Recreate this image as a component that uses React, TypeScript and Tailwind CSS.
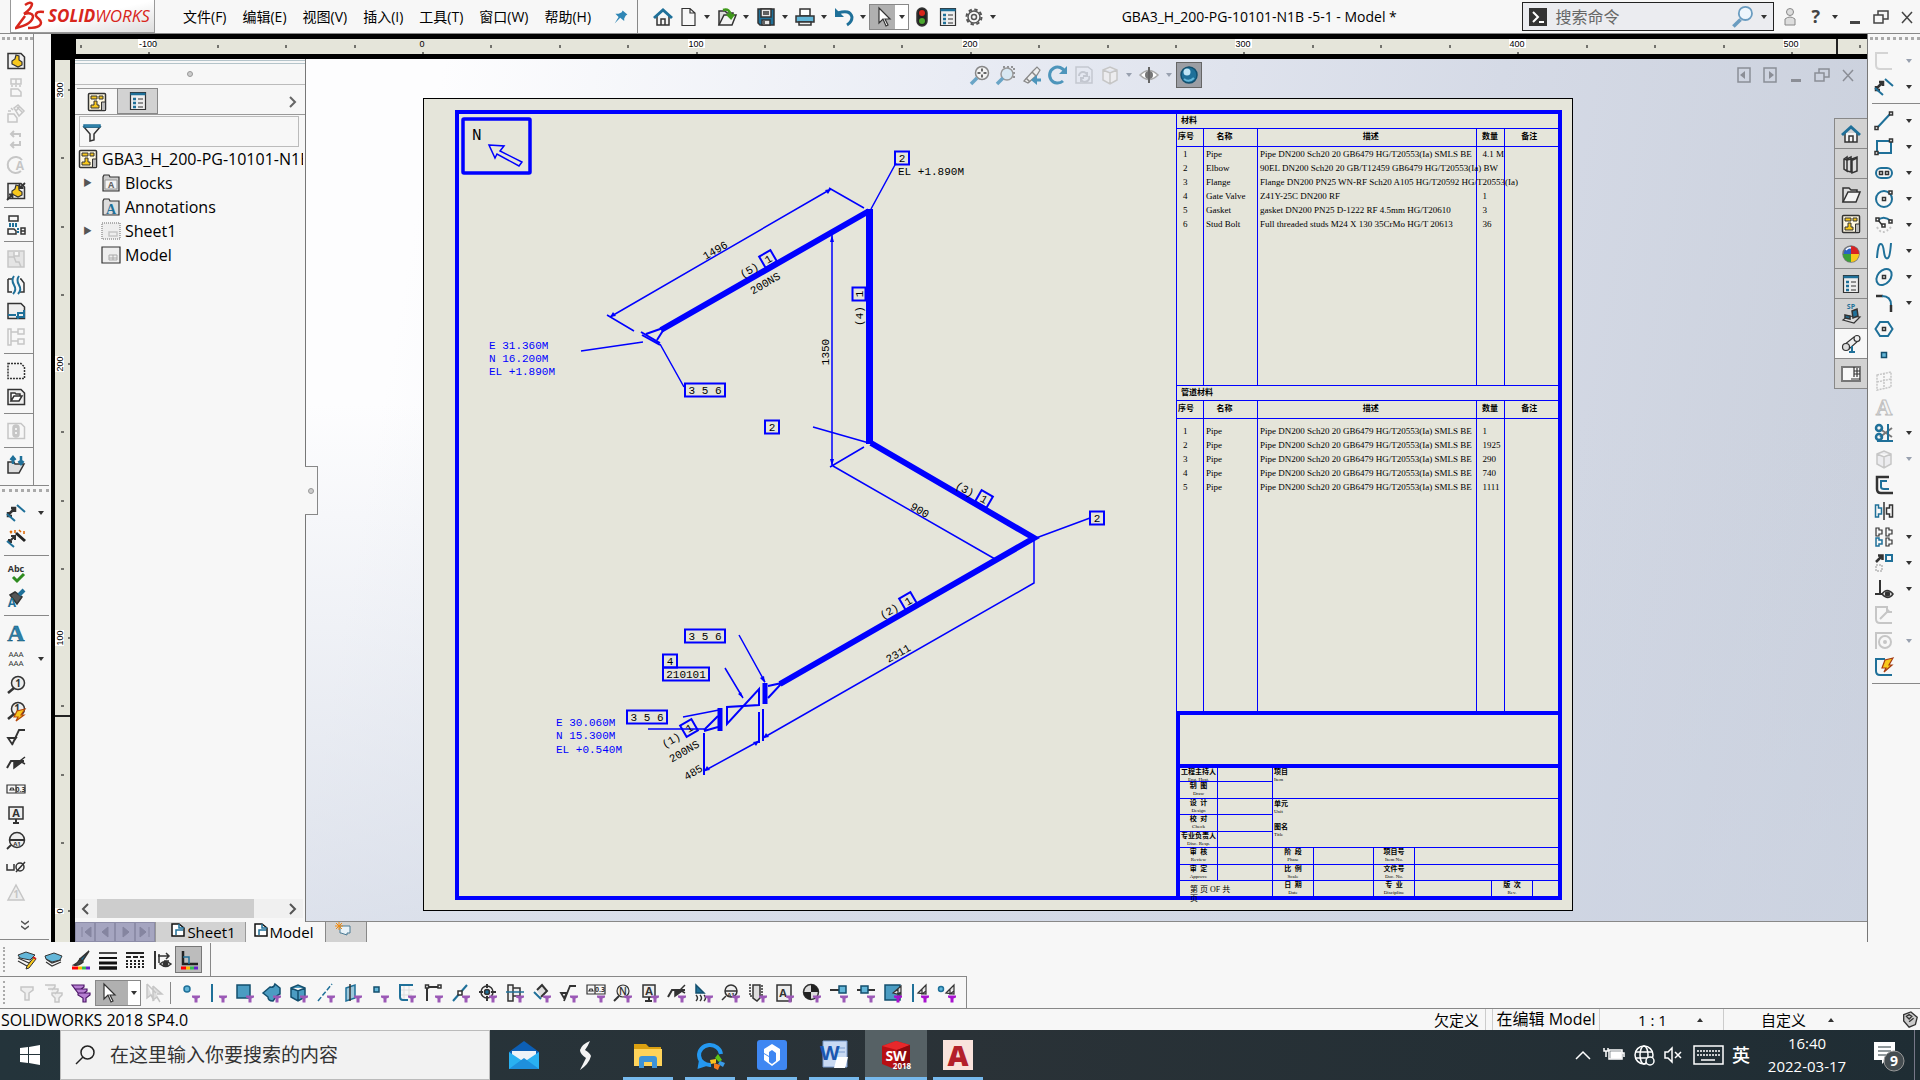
import type { ReactNode } from 'react';

const T = '#1f7099';
const B = '#63b6d8';
const G = '#c6c6c6';
const K = '#333333';
const Y = '#f8c81c';

const Funnel = ({ color = '#9b59b6' }: { color?: string }) => (
  <path d="M11 12.500h8v2l-2.500 1v4h-3v-4l-2.500-1z" fill={color} stroke="none" />
);

const Glyph = ({ x, y, size = 10, color = K, weight = 700, children }: { x: number; y: number; size?: number; color?: string; weight?: number; children: string }) => (
  <text x={x} y={y} fontSize={size} fill={color} stroke="none" fontWeight={weight} textAnchor="middle" fontFamily="Open Sans, sans-serif">
    {children}
  </text>
);

const sheetShape = 'M2 2.500h13l3.500 3.500v11.500h-16.500z';
const partShape = 'M10 4l3 1v4l3 2v3l-4 2-6-3v-3l3-2z';

// 20 x 20 drawings, one for each toolbar command
const icons: Record<string, ReactNode> = {
  part: <><path d={sheetShape} fill="#eee" /><path d={partShape} fill={Y} strokeWidth="1.200" /></>,
  views3: <g stroke={G}><path d="M5 2h10v5h-10zM5 12h7l3 3v4h-10zM10 2v5M5 9h2M9 9h2M13 9h2" /></g>,
  projected: <g stroke={G}><path d="M8 5l4-3 6 6-5 5zM2 11h6l3 4v4h-9zM5 5l2 2M2 8h3M11 4l5 5M14 3l-4 5" /></g>,
  auxiliary: <g stroke={G} strokeWidth="2"><path d="M6 5h8v3M14 12v4h-9M8 2l-3 3 3 3M8 13l-3 3 3 3" /></g>,
  section: <><path d="M15 16a8 8 0 1 1 1-11" stroke={G} strokeWidth="2" /><Glyph x={14} y={15} size={12} color={G}>A</Glyph></>,
  partArrow: <><path d={sheetShape} fill="#eee" /><path d={partShape} fill={Y} strokeWidth="1.200" /><path d="M1 19l5-5M3 13.500h3.500v3.500M19 2l-5 5M13.500 3v4h4" strokeWidth="1.800" /></>,
  layout: <><path d="M3 1h9v5h-9zM2 14h6l2 2v3h-8zM15 13h4v6h-4zM15 16h4" /><path d="M3 9h9M3 11h9M12 13v5" stroke={T} strokeDasharray="2 1" strokeWidth="2" /></>,
  broken: <g stroke={G}><path d="M2 2h16v16h-16zM2 8l6 0 2 5h3l2 5M8 3v4h5v-4" fill="#e4e4e4" /></g>,
  breakView: <><path d="M2 4h4M2 4v13h4M14 4h1l3 4v9h-4" /><path d="M8 1q-3 4 0 9t-1 9M13 1q-3 4 0 9t-1 9" stroke={T} strokeWidth="2" /></>,
  crop: <><path d={sheetShape} fill="#eee" /><path d="M10 16h8v-7M12 18v-6h7M2 14h8" stroke={T} strokeWidth="2" /></>,
  tree: <g stroke={G}><path d="M2 2h3v16h-3zM5 5h7M12 2h6v5h-6zM12 12h6v5h-6zM5 14h7" /></g>,
  empty: <path d={sheetShape} strokeDasharray="2 1" fill="#f4f4f4" />,
  openSheet: <><path d={sheetShape} fill="#eee" /><path d="M5 14v-8h4l1 1h4v2M5 14l3-5h8l-3 5z" fill="#fff" /></>,
  traffic0: <g stroke={G}><path d={sheetShape} /><rect x="7" y="4" width="6" height="12" rx="3" fill={G} /><path d="M9 8h2M9 12h2" stroke="#fff" /></g>,
  update: <><path d="M2 18v-11h6l1 2h9l-5 9z" fill="#ddd" /><path d="M7 9v-6M4.500 5l2.500-3 2.500 3M15 1v7M12.500 6l2.500 3 2.500-3" stroke={T} strokeWidth="2.500" /></>,
  dimension: <><path d="M2 12l7-7M5 5h4v4M2 9v4h4" strokeWidth="2.500" /><path d="M11 2l8 7M1 11l8 7" stroke={T} strokeWidth="2" /></>,
  wizard: <><path d="M3 13l6-6M5 7h4v4M3 10v3h3" strokeWidth="2" /><path d="M1 12l7 6" stroke={T} strokeWidth="2" /><path d="M10 4l9 8" strokeWidth="3" stroke="#222" /><path d="M4 2l2 2M6 2l-2 2M13 1l2 2M9 1v3M18 2v3" stroke="#d60" strokeWidth="1.500" /></>,
  spell: <><Glyph x={10} y={9} size={9}>Abc</Glyph><path d="M7 14l4 4 7-7" stroke="#2e8b1f" strokeWidth="3" /></>,
  format: <><path d="M4 6l5-3 7 5-5 7z" fill="#555" /><path d="M13 6l5-5" stroke={T} strokeWidth="4" /><Glyph x={6} y={18} size={12} color={T}>A</Glyph></>,
  note: <text x="10" y="18" fontSize="24" fontWeight="700" fill="#2b83ad" stroke="#134f6e" strokeWidth="0.500" textAnchor="middle" fontFamily="Liberation Serif, serif">A</text>,
  pattern: <><Glyph x={10} y={8} size={8} weight={400}>AAA</Glyph><Glyph x={10} y={17} size={8} weight={400}>AAA</Glyph></>,
  balloon: <><circle cx="12" cy="8" r="6.500" fill="#eee" /><path d="M8 13l-6 5" strokeWidth="2.500" /><Glyph x={12} y={12}>1</Glyph></>,
  autoBalloon: <><circle cx="12" cy="8" r="6.500" fill="#eee" /><path d="M8 13l-6 5" strokeWidth="2.500" /><Glyph x={11} y={11}>1</Glyph><path d="M19 8l-8 2-3 6h4l-2 4 8-6h-3z" fill={Y} stroke="#b5480c" strokeWidth="1.200" /></>,
  finish: <path d="M2 11h8l-4 6zM6 18l7-15h6" strokeWidth="1.800" />,
  weld: <><path d="M1 15l4-7h13" strokeWidth="2" /><path d="M8 9v6l8-6z" fill={K} /><path d="M19 4l-5 4 5 3" /></>,
  tolerance: <><path d="M1 6h18v8h-18zM10 6v8M4 11h4l-1-2h-2z" strokeWidth="1.200" /><Glyph x={14.500} y={13} size={7}>0.3</Glyph></>,
  datum: <><path d="M3 2h14v12h-14z" fill="#eee" /><path d="M10 14v3M7 18h6" strokeWidth="2" /><Glyph x={10} y={12} size={11}>A</Glyph></>,
  target: <><circle cx="11" cy="9" r="7.500" fill="#eee" /><path d="M4 9h14M5 14l-4 4" strokeWidth="1.800" /><Glyph x={11} y={15} size={6}>A1</Glyph></>,
  hole: <><path d="M1 7v6h7v-6M19 5l-9 10" /><circle cx="14" cy="10" r="4" /></>,
  revision: <><path d="M10 2l8 15h-16z" stroke={G} fill="#eee" /><Glyph x={10} y={15} color={G}>1</Glyph></>,
  home: <><path d="M4 9v9h12v-9" fill="#f4f4f4" /><path d="M1 11l9-8 9 8" stroke={T} strokeWidth="3" /><path d="M8 18v-6h4v6" /></>,
  file: <path d="M4 1.500h8l5 4.500v12.500h-13zM12 2v4h5" fill="#f7f7f7" strokeWidth="1.200" />,
  folder: <><path d="M2 18v-14h6l2 2h6v3" fill="#ddd" /><path d="M2 18l5-10h12l-4 10z" fill="#f4f4f4" /></>,
  open: <><path d="M2 18v-14h6l2 2h6v3" fill="#ddd" /><path d="M2 18l5-10h12l-4 10z" fill="#f4f4f4" /><path d="M6 3q7-2 8 6M10 7l4 4 3-4" stroke="#3f9a1a" strokeWidth="2.500" /></>,
  save: <><path d="M2 2h16v16h-14l-2-2z" fill={T} /><path d="M5 2h10v8h-10zM6 13h8v5h-8z" fill="#e8e8e8" /><path d="M7 5h6M7 7h6M8 14v3" /></>,
  print: <><path d="M5 2h10v7h-10z" fill="#fff" /><path d="M1 9h18v6h-18z" fill={B} /><path d="M4 15h12v3h-12z" fill="#eee" /></>,
  undo: <><path d="M4 6q12-4 14 4 0 5-5 8" stroke={T} strokeWidth="3" /><path d="M1 1v9h9z" fill={T} stroke="none" /></>,
  cursor: <path d="M6 1v15l4-4 3 7 2-1-3-6h5z" fill="#fff" strokeWidth="1.200" />,
  traffic: <><rect x="5" y="1" width="10" height="18" rx="5" fill="#222" /><circle cx="10" cy="6" r="3" fill="#d8251b" stroke="none" /><circle cx="10" cy="14" r="3" fill="#4aa82e" stroke="none" /></>,
  list: <><path d="M2.500 1.500h15v17h-15z" fill="#eee" strokeWidth="1.200" /><path d="M2.500 3h15" stroke={T} strokeWidth="2.500" /><path d="M5 8h3M5 12h3M5 16h3" stroke={T} strokeWidth="2.500" /><path d="M10 8h5M10 12h5M10 16h5" strokeWidth="1.200" /></>,
  gear: <><circle cx="10" cy="10" r="7.500" stroke="#555" strokeWidth="2" strokeDasharray="3.400 2.500" /><circle cx="10" cy="10" r="6" stroke="#555" /><circle cx="10" cy="10" r="2.500" stroke="#555" /></>,
  pin: <path d="M12 2l6 5-2 1-2 4v3l-5-4-7 7 5-8-4-4h4l4-2z" fill="#2f86b5" stroke="none" />,
  magnify: <><circle cx="12" cy="7" r="5.500" fill="#eef6fc" stroke="#6a9cc0" /><path d="M8 12l-6 6" stroke="#6a9cc0" strokeWidth="3" /></>,
  person: <g stroke="#888" strokeWidth="1"><circle cx="10" cy="5" r="3.500" fill="#ddd" /><path d="M5 18v-6q5-4 10 0v6z" fill="#ddd" /></g>,
  zoomFit: <><circle cx="12" cy="8" r="6.500" fill="#f4f4f4" stroke="#888" /><path d="M7 13l-6 6" stroke="#6aa5c6" strokeWidth="3.500" /><path d="M12 3.500v9M7.500 8h9" stroke="#666" strokeDasharray="3 3" strokeWidth="2" /></>,
  zoomArea: <><path d="M7 2h11v12" stroke="#777" strokeDasharray="2 2" /><circle cx="11" cy="9" r="6" fill="#d8e8f2" stroke="#999" /><path d="M7 13l-6 6" stroke="#6aa5c6" strokeWidth="3.500" /></>,
  prevView: <><path d="M2 16l9-10 4-4 3 3-3 5-9 8z" fill="#eee" stroke="#888" strokeWidth="1.200" /><path d="M10 7l4 4M4 13l4 4" stroke="#888" /><path d="M19 15h-5" stroke="#4d95bb" strokeWidth="3" /><path d="M15 10v10l-6-5z" fill="#4d95bb" stroke="none" /></>,
  rotate: <><path d="M15 16a8 8 0 1 1 2-9" stroke="#4d95bb" strokeWidth="3" /><path d="M19 1v8h-8z" fill="#4d95bb" stroke="none" /></>,
  view3d: <g stroke="#c3c7d0"><path d="M2 2h12l4 3v13h-16z" /><path d="M5 11a4 4 0 0 1 8 0M15 11a4 4 0 0 1-8 3M13 7v4h-4M7 17v-4h3" strokeWidth="2" /></g>,
  cube0: <g stroke={G}><path d="M3 5l7-3 7 3v10l-7 4-7-4zM3 5l7 3 7-3M10 8v11" fill="#ececef" /></g>,
  eye: <><path d="M1 10q9-9 18 0-9 9-18 0z" fill="#fff" stroke="#aaa" /><circle cx="10" cy="10" r="4" fill="#777" stroke="none" /><path d="M10 2v16" strokeWidth="2" stroke="#666" /></>,
  sphere: <><circle cx="10" cy="10" r="8" fill={T} stroke="#12506f" /><circle cx="8" cy="7" r="3.500" fill="#bfe5f6" stroke="none" /><path d="M5 14q5 4 10-1" stroke={B} strokeWidth="2" /></>,
  palette: <><rect x="1.500" y="1.500" width="17" height="17" rx="1" fill="#fff8e0" /><path d="M4 4h6v3h-6zM12 4h4v3h-4zM7 9h3v4h2v3h-8v-3h3z" fill={Y} strokeWidth="1" /><path d="M14.500 10h4v8.500h-4z" fill="#bbb" strokeWidth="1" /></>,
  library: <><path d="M3 5l3-2v14l-3-2zM6 5l4-2v15l-4-1zM11 5l5-2v14l-5 2z" fill="#ddd" /><path d="M3 5l3 1 4-1 2 1 4-2" /></>,
  appearance: <><circle cx="10" cy="10" r="8" fill="#2b62c4" stroke="#777" /><path d="M10 2a8 8 0 0 1 8 8h-8z" fill="#d72323" stroke="none" /><path d="M10 10h8a8 8 0 0 1-8 8z" fill={Y} stroke="none" /><path d="M2 10h8v8a8 8 0 0 1-8-8z" fill="#3ba038" stroke="none" /><path d="M5 6q2-3 5-2" stroke="#fff" /></>,
  stamp: <><path d="M2 16l5-4 12 1-6 6z" fill="#ddd" strokeWidth="1.200" /><path d="M4 11l5 1v3l-5-1zM11 7l5-2 1 7-5 2z" fill={T} /><Glyph x={10} y={5} size={7} color={T}>SP</Glyph></>,
  pipe: <><path d="M3 11l10-8 4 4-9 8z" fill="#eee" strokeWidth="1.200" /><circle cx="5" cy="13" r="3.500" fill="#ddd" strokeWidth="1.200" /><circle cx="16" cy="4.500" r="3" fill="#eee" strokeWidth="1.200" /><path d="M11 12v6M8 18h6" stroke={T} strokeWidth="2" /></>,
  titleBlock: <><path d="M1 3h18v14h-18z" fill="#f7f7f7" stroke="#777" strokeWidth="2" /><path d="M13 3v10M13 7h6M13 10h6M16 4v9M10 15h9" strokeWidth="1.200" /></>,
  sketch0: <g stroke="#d4d4d4" strokeWidth="2"><path d="M14 2h-12v12q0 4 4 4h12" /></g>,
  line: <><path d="M3 17l14-15" stroke={T} strokeWidth="2" /><path d="M1 15.500h3v3h-3zM15.500 1h3v3h-3z" fill="#fff" /></>,
  rect: <><path d="M3 4h14v12h-14z" stroke={T} strokeWidth="2" /><path d="M1 14.500h3v3h-3zM15.500 2h3v3h-3z" fill="#fff" /></>,
  slot: <><rect x="2" y="5" width="16" height="10" rx="5" stroke={T} strokeWidth="2" /><path d="M5.500 8.500h3v3h-3zM11.500 8.500h3v3h-3z" /></>,
  circle: <><circle cx="10" cy="10" r="8" stroke={T} strokeWidth="2" /><path d="M8.500 8.500h3v3h-3zM15 2h3v3h-3z" fill="#fff" /></>,
  arc: <><path d="M4 5q6-5 13 1" stroke={T} strokeWidth="2" /><path d="M4 5l5 6" /><path d="M2 3h3v3h-3zM8 9h3v3h-3zM15 5h3v3h-3z" fill="#fff" /><path d="M3 12q5 10 14 0" stroke={G} strokeDasharray="2 2" strokeWidth="2" /></>,
  spline: <path d="M3 17q1-15 4-14 2 0 3 8 1 8 4 6 2-1 3-15" stroke={T} strokeWidth="2" />,
  ellipse: <><ellipse cx="10" cy="10" rx="9" ry="6.500" transform="rotate(-50 10 10)" stroke={T} strokeWidth="2" /><path d="M8.500 8.500h3v3h-3z" /></>,
  fillet: <><path d="M2 3h7" strokeWidth="2.500" /><path d="M8 3q9 0 9 9" stroke={T} strokeWidth="2" /><path d="M17 12v7" strokeWidth="2.500" /></>,
  polygon: <><path d="M6 3h8l4.500 7-4.500 7h-8l-4.500-7z" stroke={T} strokeWidth="2" /><path d="M8.500 8.500h3v3h-3z" /></>,
  point: <path d="M7.500 7.500h5v5h-5z" fill={B} stroke="#134f6e" />,
  plane0: <g stroke={G} strokeDasharray="2 1"><path d="M3 4l14-3v15l-14 3zM3 11l14-3M10 2v16" /></g>,
  text0: <text x="10" y="18" fontSize="23" fontWeight="700" fill="#f4f4f4" stroke="#bdbdbd" strokeWidth="1" textAnchor="middle" fontFamily="Liberation Serif, serif">A</text>,
  trim: <><path d="M6 6l12 8M6 14l12-9" stroke="#777" strokeWidth="2" /><circle cx="5" cy="5" r="3" stroke={T} strokeWidth="2.500" /><circle cx="5" cy="14" r="3" stroke={T} strokeWidth="2.500" /><path d="M14 1v18M3 18h16" stroke={T} strokeWidth="2" /></>,
  offset: <><path d="M15 2h-12v12q0 4 4 4h12" strokeWidth="2.500" /><path d="M13 6h-6v6q0 2 3 2h5" stroke={T} strokeWidth="2" /></>,
  mirror: <><path d="M10 1v18" strokeWidth="1.500" /><path d="M1.500 4h3v3h3v6h-3v3h-3z" stroke={T} /><path d="M18.500 4h-3v3h-3v6h3v3h3z" /></>,
  linear: <><path d="M2 1h3v2h3v4h-3v2h-3zM12 1h3v2h3v4h-3v2h-3zM12 11h3v2h3v4h-3v2h-3z" strokeWidth="1.200" /><path d="M2 11h3v2h3v4h-3v2h-3z" stroke={T} /></>,
  move: <><path d="M2 9l6-6M4 2.500h4.500v4.500" strokeWidth="2.500" /><path d="M12 2h6v6h-6z" stroke={T} strokeWidth="2" /><path d="M2 12h6v6h-6z" stroke={G} strokeDasharray="2 1" strokeWidth="2" /></>,
  relations: <><path d="M6 1v15M1 15h8" strokeWidth="2" /><path d="M8 15q5-7 11 0-5 7-11 0z" fill="#fff" /><circle cx="13.500" cy="15" r="2" fill={K} /></>,
  repair0: <g stroke={G} strokeWidth="2"><path d="M14 2h-12v12q0 4 4 4h12M6 14l9-9M13 3v4h5" /></g>,
  quick0: <g stroke={G} strokeWidth="2"><path d="M18 2h-16v16" /><circle cx="11" cy="11" r="6" /><circle cx="11" cy="11" r="1" /></g>,
  rapid: <><path d="M11 2h-9v12q0 4 4 4h12" stroke={T} strokeWidth="2" /><path d="M19 1l-8 2-3 8h4l-2 4 8-7h-3z" fill={Y} stroke="#a63c10" strokeWidth="1.200" /></>,
  layerEdit: <><path d="M1 8l11 5 6-5M1 11l9 5" strokeWidth="1.200" /><path d="M1 5l8-3 9 3-5 5-10-2z" fill={B} strokeWidth="1" /><path d="M19 9l-7 9-3 1 1-3 7-9z" fill={Y} strokeWidth="1" /><path d="M16 7l3 2" stroke="#c22" strokeWidth="2" /></>,
  layer: <><path d="M2 9l6 4 9-3M2 12l6 4 9-4" strokeWidth="1.200" /><path d="M1 6l9-3 8 3-2 4-8 2-6-3z" fill={B} strokeWidth="1" /></>,
  color: <><path d="M18 1l-9 8 2 3z" fill={T} /><path d="M9 9l3 3q-4 4-9 3 4-2 6-6z" fill="#444" /><path d="M1 18h6" stroke="#f00" strokeWidth="3" /><path d="M7 18h4" stroke="#fb0" strokeWidth="3" /><path d="M11 18h4" stroke="#3b5" strokeWidth="3" /><path d="M15 18h4" stroke="#62c" strokeWidth="3" /></>,
  weight: <g stroke="#111"><path d="M1 3h18" strokeWidth="1.500" /><path d="M1 8h18" strokeWidth="2" /><path d="M1 13h18" strokeWidth="3" /><path d="M1 18h18" strokeWidth="3.500" /></g>,
  lineStyle: <g stroke="#222" strokeWidth="2"><path d="M1 3h18" /><path d="M1 7h18" strokeDasharray="5 2" /><path d="M1 11h18M1 14h18M1 17h18" strokeDasharray="2 2" /></g>,
  edges: <><path d="M3 1v18" strokeWidth="2" /><path d="M6 6h11M14 3l3 3-3 3M7 4v9M17 11h-5" strokeWidth="1.500" /><path d="M8 14q5-5 11 0-5 5-11 0z" fill="#ddd" /><circle cx="13.500" cy="14" r="2" fill={K} /></>,
  colorMode: <><path d="M4 1v13h15" strokeWidth="2.500" stroke="#222" /><path d="M4 7h6v7" stroke={T} /><path d="M2 18h5" stroke="#f00" strokeWidth="3" /><path d="M7 18h4" stroke="#fb0" strokeWidth="3" /><path d="M11 18h4" stroke="#3b5" strokeWidth="3" /><path d="M15 18h4" stroke="#62c" strokeWidth="3" /></>,
  filter0: <path d="M4 4h12v3l-4 3v7h-4v-7l-4-3z" stroke={G} fill="#eee" />,
  filters0: <path d="M1 2h10v2l-3 3M4 6h10v2l-3 3M8 10h10v2l-3 3v4h-4v-4l-3-3z" stroke={G} fill="#eee" />,
  filters: <path d="M1 2h12v2l-3 2h-6zM4 6h12v2l-3 2h-6zM7 10h12v2l-4 3v4h-3v-4l-5-3z" stroke="#4d1769" fill="#b77fd2" strokeWidth="1.200" />,
  cursors0: <path d="M3 1v14l4-3 3 6M9 3v14l4-3 3 5M3 1l9 9M9 3l9 8h-5" stroke={G} fill="#ddd" />,
  fVertex: <><circle cx="6" cy="6" r="3" fill={B} stroke={T} /><Funnel /></>,
  fEdge: <><path d="M4 1v18" stroke={T} strokeWidth="2" /><Funnel /></>,
  fFace: <><path d="M2 2h13v13h-13z" fill="#4b9cc2" stroke="#134f6e" /><Funnel /></>,
  fSurface: <><path d="M1 10l7-6q4 1 5-3l5 4v6q-3 1-7 7-5 0-5-4z" fill="#4b9cc2" stroke="#134f6e" /><Funnel /></>,
  fSolid: <><path d="M2 5l7-3 7 3v9l-7 4-7-4zM2 5l7 3 7-3M9 8v10" fill="#4b9cc2" stroke="#134f6e" /><Funnel /></>,
  fAxis: <><path d="M2 18l14-17" stroke={T} strokeDasharray="5 2" /><Funnel /></>,
  fPlane: <><path d="M3 5l9-3v13l-9 3z" fill="#9cc8dc" stroke={T} /><path d="M7 1v17" /><Funnel /></>,
  fPoint: <><path d="M4 4h5v5h-5z" fill={B} stroke="#134f6e" /><Funnel /></>,
  fSketch: <><path d="M7 2v16M12 2v12M2 7h15M2 12h13" stroke="#ddd" strokeWidth="1" /><path d="M16 2h-13v12q0 3 3 3h5" stroke={T} strokeWidth="2" /><Funnel /></>,
  fSegment: <><path d="M3 18v-14h13" strokeWidth="2" /><path d="M1.500 2h3v3h-3zM14 2h3v3h-3z" fill="#fff" /><Funnel /></>,
  fMid: <><path d="M2 18l14-16" stroke={T} strokeWidth="2" /><path d="M7 8h4v4h-4z" fill="#fff" /><Funnel /></>,
  fCenter: <><circle cx="9" cy="9" r="6" /><circle cx="9" cy="9" r="2.500" fill={T} /><path d="M9 1v4M9 13v5M1 9h4M13 9h5" strokeWidth="2" /><Funnel /></>,
  fCenterline: <><path d="M3 2h5v16h-5zM8 5h7v8h-7" fill="#eee" /><path d="M1 9h18" stroke={T} /><Funnel /></>,
  fDim: <><path d="M5 7l5-5 5 6-6 6" fill="#ddd" strokeWidth="2" /><path d="M2 9l7 7" stroke={T} strokeWidth="2" /><Funnel /></>,
  fFinish: <><path d="M2 10h6l-3 5zM5 18l6-15h6" strokeWidth="1.800" /><Funnel /></>,
  fTol: <><path d="M1 2h18v9h-18zM9 2v9M3 8h4l-1-2h-2z" strokeWidth="1.200" /><Glyph x={14} y={9} size={7}>0.3</Glyph><Funnel /></>,
  fNote: <><circle cx="10" cy="8" r="6" fill="#eee" strokeWidth="1.200" /><path d="M6 13l-5 5" strokeWidth="2" /><Glyph x={10} y={12} weight={600}>N</Glyph><Funnel /></>,
  fDatum: <><path d="M3 2h12v12h-12z" fill="#eee" /><path d="M9 14v3M5 18h7" strokeWidth="2" /><Glyph x={9} y={12} size={11}>A</Glyph><Funnel /></>,
  fWeld: <><path d="M1 14l4-7h13" strokeWidth="2" /><path d="M8 8v5l7-5z" fill={K} /><path d="M18 2l-5 5 5 3" /><Funnel /></>,
  fCosmetic: <><path d="M2 2v8h8z" fill={T} stroke="#134f6e" /><path d="M2 12q3 3 0 6M6 12q3 3 0 6M10 12q3 3 0 6" /><Funnel /></>,
  fTarget: <><circle cx="10" cy="8" r="6" fill="#eee" /><path d="M4 8h12M5 13l-4 4" /><Glyph x={10} y={14} size={6}>A1</Glyph><Funnel /></>,
  fThread: <><path d="M2 1v12h12v-12" strokeDasharray="2 1" /><path d="M5 2h7v13l-3 3-4-3z" fill="#ddd" /><Funnel /></>,
  fBlock: <><path d="M2 2h14v16h-14z" fill="#eee" /><Glyph x={8} y={14} size={11}>A</Glyph><Funnel /></>,
  fCog: <><circle cx="9" cy="9" r="7.500" fill="#ddd" /><path d="M9 1.500a7.500 7.500 0 0 1 7.500 7.500h-7.500zM9 9v7.500a7.500 7.500 0 0 1-7.500-7.500z" fill="#222" stroke="none" /><Funnel /></>,
  fRoute: <><path d="M1 7h10" strokeWidth="2" /><path d="M10 3h7v7h-7z" fill={B} stroke="#134f6e" /><Funnel /></>,
  fConnect: <><path d="M1 7h18" strokeWidth="2" /><path d="M5 3h7v7h-7z" fill={B} stroke="#134f6e" /><Funnel /></>,
  fMesh: <><path d="M2 2h15v15h-15z" fill="#4b9cc2" stroke="#134f6e" /><path d="M10 10l8-7v9zM10 10l5-4 0 6 3-3" fill="#ddd" strokeWidth="1.200" /><Funnel color="#a813cf" /></>,
  fMeshEdge: <><path d="M3 1v18" stroke={T} strokeWidth="2" /><path d="M8 10l8-8v9zM12 6v5l4-3" fill="#ddd" strokeWidth="1.200" /><Funnel color="#a813cf" /></>,
  fMeshVertex: <><circle cx="4" cy="6" r="2.500" fill={B} stroke={T} /><path d="M9 10l8-8v9zM13 6v5l4-3" fill="#ddd" strokeWidth="1.200" /><Funnel color="#a813cf" /></>,
  blocks: <><path d="M2 18v-14l1-2h5l1 2h9v14z" fill="#ccc" strokeWidth="1.200" /><path d="M4 7h12v9h-12z" fill="#f4f4f4" stroke="#999" strokeWidth="1" /><Glyph x={10} y={15} size={9} color="#666">A</Glyph></>,
  annotations: <><path d="M2 18v-14l1-2h5l1 2h9v14z" fill="#ddd" strokeWidth="1.200" /><text x="10" y="17" fontSize="14" fontWeight="700" fill={T} stroke="none" textAnchor="middle" fontFamily="Liberation Serif, serif">A</text></>,
  sheet: <><path d="M1 2h18v16h-18z" strokeDasharray="1 1" stroke="#999" fill="#eee" /><path d="M8 11h8v4h-8z" stroke={G} /></>,
  model: <><path d="M1 2h18v16h-18z" fill="#eee" strokeWidth="1.200" /><path d="M8 10h8v5h-8zM8 13h8M12 10v5" stroke="#aaa" strokeWidth="1" /></>,
  funnel: <><path d="M2 5h16l-6 7v6l-4 1v-7z" fill="#f4f4f4" /><path d="M2 3h16v2h-16z" fill={B} stroke={T} /></>,
  tag: <path d="M3 4l8-3 7 6-2 8-7 3-6-7zM6 6l3-2 3 2-3 3zM9 12l5-4" fill="#ccc" />,
};

const Icon = ({ name, className = 'size-5' }: { name: string; className?: string }) => (
  <svg viewBox="0 0 20 20" fill="none" stroke={K} strokeWidth="1.500" className={`shrink-0 overflow-visible ${className}`} aria-hidden="true">
    {icons[name]}
  </svg>
);

const Caret = ({ faded = false, up = false }: { faded?: boolean; up?: boolean }) => (
  <svg viewBox="0 0 6 4" className={`w-1.5 h-1 shrink-0 ${faded ? 'text-gray-400' : 'text-[#333]'}`} aria-hidden="true">
    <path d={up ? 'M0 4h6l-3-4z' : 'M0 0h6l-3 4z'} fill="currentColor" />
  </svg>
);

const WindowButtons = ({ className }: { className: string }) => (
  <div className={`flex ${className}`}>
    {[
      ['Minimize', 'M5 15.500h10', 3],
      ['Restore', 'M3 8h9v8h-9zM7 8v-4h10v8h-5', 1.5],
      ['Close', 'M5 5l10 11M15 5l-10 11', 1.5],
    ].map(([label, d, w]) => (
      <button key={label} aria-label={String(label)} className="w-[26px] h-7 flex items-center justify-center">
        <svg viewBox="0 0 20 20" className="size-5" fill="none" stroke="currentColor" strokeWidth={w}>
          <path d={String(d)} />
        </svg>
      </button>
    ))}
  </div>
);

const menus = ['文件(F)', '编辑(E)', '视图(V)', '插入(I)', '工具(T)', '窗口(W)', '帮助(H)'];

const TitleBar = () => (
  <header className="h-[34px] flex items-center border-b border-[#888] bg-[#f7f7f7] whitespace-nowrap">
    <div className="ml-2.5 w-[145px] h-full shrink-0 flex items-center border-x border-b border-[#999] bg-linear-to-br from-white via-white to-[#ddd]">
      <svg viewBox="0 0 30 30" className="ml-1 size-[30px] shrink-0" fill="none" stroke="#d8261c" strokeWidth="2.500" aria-hidden="true">
        <path d="M10 4q6-4 7-1 0 4-8 10" />
        <path d="M9 13q8-2 9 2 0 8-17 12l9-12" />
        <path d="M29 11q-7-1-8 2-1 2 3 5 4 4 0 7-3 2-11 2" />
      </svg>
      <span className="ml-[3px] font-['Open_Sans',sans-serif] italic text-[17px] text-[#d8261c]">
        <b>SOLID</b>WORKS
      </span>
    </div>
    <nav className="ml-7 flex gap-4 text-[14px]">
      {menus.map(m => <button key={m}>{m}</button>)}
    </nav>
    <button aria-label="Pin" className="ml-[22px]"><Icon name="pin" className="size-4" /></button>
    <div className="ml-2 h-full border-l border-[#888]" />
    <div className="ml-[15px] flex items-center">
      <button aria-label="Home" className="mr-[5px]"><Icon name="home" /></button>
      {['file', 'open', 'save', 'print', 'undo'].map(name => (
        <button key={name} aria-label={name} className="w-[39px] flex items-center gap-1.5"><Icon name={name} /><Caret /></button>
      ))}
      <button aria-label="Select" className="h-[26px] flex items-center border border-[#888] ml-[-4px]">
        <span className="w-[25px] h-full flex items-center justify-center bg-[#b0b0b0]"><Icon name="cursor" /></span>
        <span className="w-[13px] h-full flex items-center justify-center bg-white"><Caret /></span>
      </button>
      <div className="ml-[3px] flex items-center gap-1.5">
        <button aria-label="Rebuild"><Icon name="traffic" /></button>
        <button aria-label="File properties"><Icon name="list" /></button>
        <button aria-label="Options" className="flex items-center gap-1.5"><Icon name="gear" /><Caret /></button>
      </div>
    </div>
    <h1 className="flex-1 text-center text-[14px]">GBA3_H_200-PG-10101-N1B -5-1 - Model *</h1>
    <div className="w-[252px] h-[29px] shrink-0 flex items-center border border-[#222] bg-[#ebecf0] px-1.5">
      <svg viewBox="0 0 18 18" className="size-[18px]" fill="#333" stroke="#fff" strokeWidth="2" aria-hidden="true">
        <path d="M0 0h18v18h-18z" stroke="none" /><path d="M4 4l5 5-5 5M10 14h5" fill="none" />
      </svg>
      <input aria-label="搜索命令" placeholder="搜索命令" className="ml-2 min-w-0 flex-1 text-[16px] outline-none placeholder:text-[#666]" />
      <Icon name="magnify" className="size-6" />
      <span className="ml-1.5"><Caret /></span>
    </div>
    <button aria-label="Login" className="ml-1.5"><Icon name="person" /></button>
    <button aria-label="Help" className="ml-[11px] flex items-center gap-3 text-[18px] font-bold text-[#444]">?<Caret /></button>
    <WindowButtons className="ml-1 text-[#444]" />
  </header>
);

// '|' marks a separator, a trailing '>' a command with a flyout
const sheetTools = ['part', 'views3', 'projected', 'auxiliary', 'section', 'partArrow', '|', 'layout', '|', 'broken', 'breakView', 'crop', 'tree', '|', 'empty', 'openSheet', '|', 'traffic0', '|', 'update'];
const noteTools = ['dimension>', 'wizard', '|', 'spell', 'format', '|', 'note', 'pattern>', 'balloon', 'autoBalloon', 'finish', 'weld', 'tolerance', 'datum', 'target', 'hole', 'revision'];
const sketchTools = ['sketch0>', 'dimension>', '|', 'line>', 'rect>', 'slot>', 'circle>', 'arc>', 'spline>', 'ellipse>', 'fillet>', 'polygon', 'point', 'plane0', 'text0', 'trim>', 'cube0>', 'offset', 'mirror', 'linear>', 'move>', 'relations>', 'repair0', 'quick0>', 'rapid', '|'];

const ToolColumn = ({ tools }: { tools: string[] }) => (
  <div className="flex flex-col">
    <div className="mt-[3px] mb-2 ml-0.5 border-t-3 border-dotted border-[#aaa]" />
    {tools.map((tool, i) => {
      if (tool === '|') return <div key={i} className="mt-[3px] mb-1 ml-1 h-px bg-[#888]" />;
      const name = tool.replace('>', '');
      return (
        <button key={i} aria-label={name} className="h-[26px] flex items-center pl-1.5">
          <Icon name={name} />
          {tool.endsWith('>') && <span className="ml-3 flex"><Caret faded={name.endsWith('0')} /></span>}
        </button>
      );
    })}
  </div>
);

const STEP = 273.8;
const TopRuler = () => (
  <svg className="w-full h-[15px] bg-[#e5e5da]" aria-hidden="true" fontFamily="Liberation Sans, sans-serif" fontSize="9">
    {Array.from({ length: 27 }, (_, i) => {
      const x = Math.round(347 - STEP + (i - 1) * (STEP / 4));
      const major = (i - 1) % 4 === 0;
      const label = String((i - 1) * 25 - 100);
      return (
        <g key={i}>
          <path d={major ? `M${x} 13v3` : `M${x} 6v3`} stroke="#000" />
          {major && <rect x={x - 9 - (label.length > 3 ? 2 : 0)} y="0" width={label === '0' ? 0 : 17} height="9" fill="#fff" />}
          {major && <text x={x - 1} y="8" textAnchor="middle">{label}</text>}
        </g>
      );
    })}
    <path d="M1761 0v15" stroke="#222" strokeWidth="2" />
  </svg>
);

const SideRuler = () => (
  <svg className="w-[15px] h-full bg-[#e5e5da]" aria-hidden="true" fontFamily="Liberation Sans, sans-serif" fontSize="9">
    {Array.from({ length: 13 }, (_, i) => {
      const y = Math.round(30 + i * (STEP / 4));
      const label = String(300 - i * 25);
      return i % 4 === 0 ? (
        <g key={i}>
          <path d={`M13 ${y}h3`} stroke="#000" />
          <rect x="0" y={y - (label === '0' ? 3 : 8)} width="9" height={label === '0' ? 6 : 16} fill="#fff" />
          <text x="8" y={y} textAnchor="middle" transform={`rotate(-90 8 ${y})`}>{label}</text>
        </g>
      ) : (
        <path key={i} d={`M6 ${y}h3`} stroke="#000" />
      );
    })}
    <path d="M0 656h15" stroke="#222" strokeWidth="2" />
  </svg>
);

const treeItems = [
  { icon: 'blocks', label: 'Blocks', open: true },
  { icon: 'annotations', label: 'Annotations', open: false },
  { icon: 'sheet', label: 'Sheet1', open: true },
  { icon: 'model', label: 'Model', open: false },
];

const FeaturePanel = () => (
  <aside className="w-[231px] shrink-0 flex flex-col border-r border-[#777] bg-[#f7f7f7] text-[16px]">
    <div className="mt-px h-1 border-y border-[#b5c4ca]" />
    <div className="h-[21px] flex items-center justify-center border-b border-[#bbb]">
      <span className="size-1.5 rounded-full border border-[#999] bg-[#ccc]" />
    </div>
    <div className="mt-1 h-[26px] flex items-end border-b border-[#999] pl-0.5">
      <button aria-label="Drawing tree" className="w-10 h-[26px] flex items-center justify-center border-t border-[#999]"><Icon name="palette" /></button>
      <button aria-label="Properties" className="w-[41px] h-[26px] flex items-center justify-center border border-[#888] bg-[#d2d2d2]"><Icon name="list" /></button>
      <button aria-label="More" className="ml-auto mr-2 mb-1.5">
        <svg viewBox="0 0 8 12" className="w-2 h-3" fill="none" stroke="#666" strokeWidth="2"><path d="M1 1l5 5-5 5" /></svg>
      </button>
    </div>
    <label className="mx-1 mr-1.5 mt-px h-[31px] flex items-center border border-[#bbb]">
      <Icon name="funnel" className="ml-0.5 size-5" />
      <input aria-label="Filter" className="min-w-0 flex-1 outline-none" />
    </label>
    <ul className="overflow-hidden whitespace-nowrap mr-0.5">
      <li className="h-6 flex items-center gap-1 pl-[3px]"><Icon name="palette" />GBA3_H_200-PG-10101-N1B</li>
      {treeItems.map(item => (
        <li key={item.label} className="h-6 flex items-center gap-1 pl-2">
          <span className="w-3.5 text-[9px] text-[#555]">{item.open ? '▶' : ''}</span>
          <Icon name={item.icon} />{item.label}
        </li>
      ))}
    </ul>
    <div className="mt-auto mb-1 mr-0.5 h-[19px] flex items-center bg-[#f0f0f0] px-1.5 text-[#555]">
      <svg viewBox="0 0 8 12" className="w-2 h-3" fill="none" stroke="currentColor" strokeWidth="2"><path d="M7 1l-5 5 5 5" /></svg>
      <div className="ml-2 h-full w-[157px] bg-[#cdcdcd]" />
      <svg viewBox="0 0 8 12" className="ml-auto w-2 h-3" fill="none" stroke="currentColor" strokeWidth="2"><path d="M1 1l5 5-5 5" /></svg>
    </div>
  </aside>
);

const Tag = ({ x, y, w = 14, rotate = 0, children }: { x: number; y: number; w?: number; rotate?: number; children: string }) => (
  <g transform={`translate(${x} ${y}) rotate(${rotate})`}>
    <rect x={-w / 2} y="-6.500" width={w} height="13" fill="none" stroke="#00f" strokeWidth="2" />
    <text y="4" textAnchor="middle" xmlSpace="preserve">{children}</text>
  </g>
);

const Mark = ({ x, y, rotate, children }: { x: number; y: number; rotate: number; children: string }) => (
  <text transform={`translate(${x} ${y}) rotate(${rotate})`} y="4" textAnchor="middle">{children}</text>
);

const PipeDrawing = () => (
  <svg viewBox="459 114 717 782" className="flex-1 min-w-0 h-[782px]" fill="none" stroke="#00f" strokeWidth="1.500">
    <rect x="463" y="119" width="67" height="54" rx="1" strokeWidth="3.500" />
    <path d="M489 145l15 1-4 5 22 11-3 4-22-12-2 4z" />
    <g strokeWidth="6">
      <path d="M661 330l208-119M871 443l163 95-254 146" />
      <path d="M869.500 209v235" strokeWidth="7" />
    </g>
    {/* flanges and valve */}
    <path d="M641 332l19 11M642 335l18 10M646 334l17-6M657 340l7-11" strokeWidth="2" />
    <path d="M768 686l14-3-14 15M727 707v17l32-35v16zM704 730l14-14M704 731l14-4" strokeWidth="2" />
    <path d="M765 683v21M720 708v23" strokeWidth="5" />
    {/* dimension lines */}
    <path d="M610 317l221-128M607 315l27 16M829 188l35 20" />
    <path d="M832 235v231M830 467l34-20M833 466l162 93" />
    <path d="M1034 540v43l-271 155M704 733v42M704 771l55-30" />
    <path d="M763 709v32M759 712v31M704 733v42" strokeWidth="2" />
    {/* leaders */}
    <path d="M871 209l25-46M813 427l56 16M1036 538l54-20M581 351l62-9M660 344l24 43" />
    <path d="M739 635l26 47M725 668l18 30M683 717l36-7M648 729h56" />
    <g fill="#00f" stroke="none">
      <path d="M831 189l-6 1 3 4zM610 317l6-1-3-4zM832 466l-2-7h4zM832 235l-2 7h4zM763 738l6-1-3-4zM704 771l6-1-3-4zM759 741l-6 1 3 4zM743 698l-5-4 3-2zM765 683l-5-5 4-2z" />
    </g>
    <g fill="#000" stroke="none" fontFamily="Liberation Mono, monospace" fontSize="11">
      <text x="472" y="140" fontSize="16">N</text>
      <g fill="#00f">
        <text x="489" y="349">E 31.360M</text>
        <text x="489" y="362">N 16.200M</text>
        <text x="489" y="375">EL +1.890M</text>
        <text x="556" y="726">E 30.060M</text>
        <text x="556" y="739">N 15.300M</text>
        <text x="556" y="753">EL +0.540M</text>
      </g>
      <text x="898" y="175">EL +1.890M</text>
      <Tag x={902} y={158}>2</Tag>
      <Tag x={772} y={427}>2</Tag>
      <Tag x={1097} y={518}>2</Tag>
      <Tag x={705} y={390} w={40}>3 5 6</Tag>
      <Tag x={705} y={636} w={40}>3 5 6</Tag>
      <Tag x={670} y={661}>4</Tag>
      <Tag x={686} y={674} w={46}>210101</Tag>
      <Tag x={647} y={717} w={40}>3 5 6</Tag>
      <Tag x={768} y={259} w={13} rotate={-30}>1</Tag>
      <Tag x={859} y={294} w={13} rotate={-90}>1</Tag>
      <Tag x={984} y={499} w={13} rotate={30}>1</Tag>
      <Tag x={908} y={601} w={13} rotate={-30}>1</Tag>
      <Tag x={689} y={728} w={13} rotate={-30}>1</Tag>
      <Mark x={715} y={250} rotate={-30}>1496</Mark>
      <Mark x={749} y={270} rotate={-30}>(5)</Mark>
      <Mark x={765} y={283} rotate={-30}>200NS</Mark>
      <Mark x={859} y={316} rotate={-90}>(4)</Mark>
      <Mark x={825} y={352} rotate={-90}>1350</Mark>
      <Mark x={965} y={489} rotate={30}>(3)</Mark>
      <Mark x={920} y={510} rotate={30}>900</Mark>
      <Mark x={889} y={611} rotate={-30}>(2)</Mark>
      <Mark x={898} y={653} rotate={-30}>2311</Mark>
      <Mark x={671} y={740} rotate={-30}>(1)</Mark>
      <Mark x={684} y={751} rotate={-30}>200NS</Mark>
      <Mark x={693} y={772} rotate={-30}>485</Mark>
    </g>
  </svg>
);

const PIPE = 'Pipe DN200 Sch20 20 GB6479 HG/T20553(Ia) SMLS BE';
const materials = [
  ['1', 'Pipe', PIPE, '4.1 M'],
  ['2', 'Elbow', '90EL DN200 Sch20 20 GB/T12459 GB6479 HG/T20553(Ia) BW', ''],
  ['3', 'Flange', 'Flange DN200 PN25 WN-RF Sch20 A105 HG/T20592 HG/T20553(Ia)', ''],
  ['4', 'Gate Valve', 'Z41Y-25C DN200 RF', '1'],
  ['5', 'Gasket', 'gasket DN200 PN25 D-1222 RF 4.5mm HG/T20610', '3'],
  ['6', 'Stud Bolt', 'Full threaded studs M24 X 130 35CrMo  HG/T 20613', '36'],
];
const cuts = ['1', '1925', '290', '740', '1111'].map((length, i) => [String(i + 1), 'Pipe', PIPE, length]);

const SpacerRow = ({ className = '' }: { className?: string }) => (
  <tr className={className}>{[0, 1, 2, 3].map(i => <td key={i} className="border-x border-[#00f]" />)}<td /></tr>
);

const MaterialTable = ({ title, rows, className, spaced = false }: { title: string; rows: string[][]; className: string; spaced?: boolean }) => (
  <table className={`w-full table-fixed border-collapse whitespace-nowrap ${className}`}>
    <caption className="h-[15px] pl-1 text-left text-[8px] leading-[14px] font-bold border-l border-b border-[#00f]">{title}</caption>
    <thead>
      <tr className="h-[17px] border-b border-[#00f] text-[8px] leading-4">
        <th className="w-[27px] pr-2 border-x border-[#00f]">序号</th>
        <th className="w-[54px] pr-3 border-x border-[#00f]">名称</th>
        <th className="pl-2 border-x border-[#00f]">描述</th>
        <th className="w-7 border-x border-[#00f]">数量</th>
        <th className="w-[54px] pr-1">备注</th>
      </tr>
    </thead>
    <tbody className="font-['Liberation_Serif',serif] text-[9px] leading-[14px] font-medium">
      {spaced && <SpacerRow className="h-1.5" />}
      {rows.map(row => (
        <tr key={row[0]} className="h-3.5">
          {row.map((cell, i) => <td key={i} className={`border-x border-[#00f] ${i === 0 || i === 3 ? 'pl-1.5' : 'pl-0.5'}`}>{cell}</td>)}
          <td />
        </tr>
      ))}
      <SpacerRow />
    </tbody>
  </table>
);

const Field = ({ zh, en, className = '' }: { zh?: string; en?: string; className?: string }) => (
  <div className={`border-r border-b border-[#00f] text-center whitespace-pre ${className}`}>
    <div className="text-[7px] leading-[9px] font-bold">{zh}</div>
    <div className="text-[5px] leading-[5px]">{en}</div>
  </div>
);

const TitleBlock = () => (
  <div className="border-l-4 border-[#00f]">
    <div className="h-[57px] border-t-4 border-b-4 border-[#00f]" />
    <div className="flex">
      <div className="grid grid-cols-[38px_55px] grid-rows-[14px_17px_16px_17px_16px]">
        <Field zh="工程主持人" en="Eng. Host." /><Field />
        <Field zh="制  图" en="Draw" /><Field />
        <Field zh="设  计" en="Design" /><Field />
        <Field zh="校  对" en="Check" /><Field />
        <Field zh="专业负责人" en="Disc. Resp." /><Field />
      </div>
      <div className="flex-1 grid grid-rows-[31px_49px] text-left">
        <div className="border-b border-[#00f] pl-px"><div className="text-[7px] leading-[9px] font-bold">项目</div><div className="text-[5px] leading-[6px]">Item</div></div>
        <div className="border-b border-[#00f] pl-px">
          <div className="text-[7px] leading-[9px] font-bold pt-px">单元</div><div className="text-[5px] leading-[6px]">Unit</div>
          <div className="mt-2 text-[7px] leading-[9px] font-bold">图名</div><div className="text-[5px] leading-[6px]">Title</div>
        </div>
      </div>
    </div>
    <div className="grid grid-cols-[38px_55px_41px_60px_41px_77px_41px_1fr] grid-rows-[17px_16px_15px]">
      <Field zh="审  核" en="Review" /><Field /><Field zh="阶  段" en="Phase" /><Field /><Field zh="项目号" en="Item No." /><Field className="col-span-3 border-r-0" />
      <Field zh="审  定" en="Approve" /><Field /><Field zh="比  例" en="Scale" /><Field /><Field zh="文件号" en="Doc. No." /><Field className="col-span-3 border-r-0" />
      <div className="col-span-2 border-r border-[#00f] pl-2.5 pr-8 text-[8px] leading-[9px] pt-1">第  页 OF 共 页</div>
      <Field zh="日  期" en="Date" className="border-b-0" /><Field className="border-b-0" /><Field zh="专  业" en="Discipline" className="border-b-0" /><Field className="border-b-0" />
      <Field zh="版  次" en="Rev." className="border-b-0" /><div />
    </div>
  </div>
);

const taskTabs = ['home', 'library', 'folder', 'palette', 'appearance', 'list', 'stamp', 'pipe', 'titleBlock'];

const Viewport = () => (
  <section className="relative flex-1 min-w-0 bg-[linear-gradient(to_bottom,transparent_40%,#ced5e3b0),linear-gradient(100deg,#fdfdfe_8%,#e9ecf4_38%,#d5dae6_70%,#c9cfdb)] border-b border-[#888]">
    <div className="h-[39px] grid grid-cols-[1fr_auto_1fr] items-center pb-2">
      <span />
      <div className="flex items-center mr-[5px]">
        {['zoomFit', 'zoomArea', 'prevView', 'rotate', 'view3d', 'cube0'].map(name => (
          <button key={name} aria-label={name} className="w-[26px] flex justify-center"><Icon name={name} /></button>
        ))}
        <span className="ml-[3px] mr-1"><Caret faded /></span>
        <button aria-label="Hide/show" className="w-[26px] flex justify-center"><Icon name="eye" /></button>
        <span className="mx-1"><Caret faded /></span>
        <button aria-label="Appearance" className="size-[26px] flex items-center justify-center border border-[#666] bg-[#9c9ea4]"><Icon name="sphere" /></button>
      </div>
      <div className="flex justify-end items-center text-[#8b8e96] pr-1.5">
        {['M11 6l-5 4 5 4z', 'M9 6l5 4-5 4z'].map(d => (
          <button key={d} aria-label="Pane" className="w-[26px] flex justify-center">
            <svg viewBox="0 0 20 20" className="size-5" fill="none" stroke="currentColor" strokeWidth="1.500"><path d="M4 3h12v14h-12z" /><path d={d} fill="currentColor" stroke="none" /></svg>
          </button>
        ))}
        <WindowButtons className="" />
      </div>
    </div>
    <div className="ml-[117px] mr-[294px] mb-[10px] border border-black bg-[#e5e5da] pt-[11px] pb-2.5 pl-[31px] pr-2.5">
      <div className="flex border-4 border-[#00f]">
        <PipeDrawing />
        <div className="w-[382px] shrink-0 flex flex-col font-['Liberation_Serif','Noto_Sans_CJK_SC',serif]">
          <MaterialTable title="材料" rows={materials} className="h-[256px]" />
          <div className="border-t border-[#00f]"><MaterialTable title="管道材料" rows={cuts} className="h-[310px]" spaced /></div>
          <TitleBlock />
        </div>
      </div>
    </div>
    <button aria-label="Collapse panel" className="absolute -left-px top-[407px] w-[13px] h-[49px] flex items-center justify-center border border-l-0 border-[#888] bg-[#f7f7f7]">
      <span className="size-1.5 rounded-full border border-[#999] bg-[#ccc]" />
    </button>
    <div className="absolute right-0 top-[59px] w-[33px] border-t border-l border-[#888]">
      {taskTabs.map(tab => (
        <button key={tab} aria-label={tab} className={`w-full h-[30px] flex items-center justify-center border-b border-[#888] ${tab === 'pipe' ? 'bg-[#f7f7f7]' : 'bg-[#d2d2d2]'}`}>
          <Icon name={tab} />
        </button>
      ))}
    </div>
  </section>
);

const TabIcon = () => (
  <svg viewBox="0 0 14 14" className="w-3.5 h-3.5 mb-1" fill="#fff" stroke="#111" strokeWidth="1.500" aria-hidden="true">
    <path d="M1 1h7l5 4v8h-12z" /><path d="M5 12v-5h7M8 1v4h5" stroke={T} fill="none" />
  </svg>
);

const SheetTabs = () => (
  <div className="h-5 flex text-[15px] leading-5">
    {['M4 2v10M13 2l-6 5 6 5z', 'M10 2l-6 5 6 5z', 'M5 2l6 5-6 5z', 'M2 2l6 5-6 5zM11 2v10'].map(d => (
      <button key={d} aria-label="Sheet navigation" className="w-5 flex items-center justify-center border border-[#8d8da8] bg-[#a5a5c0]">
        <svg viewBox="0 0 14 14" className="size-3.5" fill="#8585a0" stroke="#8585a0"><path d={d} /></svg>
      </button>
    ))}
    <button className="w-[91px] flex items-center justify-center gap-0.5 pl-1.5 border-x border-[#999] bg-[#d2d2d2]"><TabIcon />Sheet1</button>
    <button className="w-[79px] flex items-center justify-center gap-0.5 pr-1"><TabIcon />Model</button>
    <button aria-label="Add sheet" className="w-[42px] flex justify-center border-x border-[#888] bg-[#d2d2d2]">
      <svg viewBox="0 0 16 14" className="w-4 h-3.5 mr-1.5" fill="#e8f2f8" stroke="#4a7a94"><path d="M5 4h10v7h-3v2l-6-2h-1z" /><path d="M4 0v8M0 4h8M1 1l6 6M7 1l-6 6" stroke="#f08a10" /></svg>
    </button>
  </div>
);

const Grip = () => <div className="ml-[3px] mr-3 w-0 self-stretch my-1 border-l-2 border-dotted border-[#aaa]" />;

const filterTools = ['fVertex', 'fEdge', 'fFace', 'fSurface', 'fSolid', 'fAxis', 'fPlane', 'fPoint', 'fSketch', 'fSegment', 'fMid', 'fCenter', 'fCenterline', 'fDim', 'fFinish', 'fTol', 'fNote', 'fDatum', 'fWeld', 'fCosmetic', 'fTarget', 'fThread', 'fBlock', 'fCog', 'fRoute', 'fConnect', 'fMesh', 'fMeshEdge', 'fMeshVertex'];

const BottomToolbars = () => (
  <div className="pt-px border-b border-[#888]">
    <div className="w-[211px] h-[33px] flex items-center border-r border-[#888]">
      <Grip />
      {['layerEdit', 'layer', 'color', 'weight', 'lineStyle', 'edges'].map(name => (
        <button key={name} aria-label={name} className="w-[27px]"><Icon name={name} /></button>
      ))}
      <button aria-label="colorMode" className="ml-[-4px] size-[27px] flex items-center justify-center border border-[#777] bg-[#bcbcbc]"><Icon name="colorMode" /></button>
    </div>
    <div className="w-[967px] h-8 flex items-center border-t border-r border-[#888]">
      <Grip />
      {['filter0', 'filters0', 'filters'].map(name => (
        <button key={name} aria-label={name} className="w-[27px]"><Icon name={name} /></button>
      ))}
      <button aria-label="Select" className="ml-[-3px] h-[26px] flex border border-[#888]">
        <span className="w-8 h-full pr-2 flex items-center justify-center bg-[#b0b0b0]"><Icon name="cursor" /></span>
        <span className="w-3 flex items-center justify-center bg-white"><Caret /></span>
      </button>
      <button aria-label="Clear filters" className="ml-[3px]"><Icon name="cursors0" /></button>
      <div className="ml-1.5 mr-2.5 h-[22px] border-l border-[#888]" />
      {filterTools.map(name => (
        <button key={name} aria-label={name} className="w-[27px]"><Icon name={name} /></button>
      ))}
    </div>
  </div>
);

const StatusBar = () => (
  <footer className="h-[21px] flex items-center text-[15px] leading-5 whitespace-nowrap">
    <span className="flex-1 pl-px text-[16px]">SOLIDWORKS 2018 SP4.0</span>
    <span className="pr-1.5">欠定义</span>
    <span className="h-full w-2 border-x border-[#ccc]" />
    <span className="w-[107px] h-full text-center text-[16px] border-r border-[#ccc]">在编辑 Model</span>
    <button className="w-[124px] h-full pl-[38px] pr-5 flex items-center justify-between border-r border-[#ccc]">1 : 1<Caret up /></button>
    <button className="w-[110px] pl-[37px] flex items-center justify-between">自定义<Caret up /></button>
    <span className="w-[86px] flex justify-end pr-px"><Icon name="tag" className="size-[18px]" /></span>
  </footer>
);

const apps = [
  {
    name: 'Mail', open: false,
    icon: <><path d="M0 12l15-11 15 11v16h-30z" fill="#0d5fb5" /><path d="M3 11h24v11h-24z" fill="#eef3f8" /><path d="M0 12l15 10 15-10v17h-30z" fill="#29b1f2" /><path d="M0 29l15-11 15 11z" fill="#1e90dd" /></>,
  },
  {
    name: 'Notes', open: false,
    icon: <path d="M19 1q-8 3-10 9 0 4 6 8-2 4-6 12 9-6 11-14-1-3-6-6 3-4 5-9z" fill="#f4f4f4" />,
  },
  {
    name: 'Explorer', open: true,
    icon: <><path d="M1 4h12l3 3h12v19h-27z" fill="#dba010" /><path d="M1 9h28v17h-28z" fill="#ffd35a" /><path d="M6 28v-9q0-3 3-3h12q3 0 3 3v9h-5v-6h-8v6z" fill="#3d93d8" /></>,
  },
  {
    name: 'Chat', open: true,
    icon: <><path d="M26 14a11 10 0 1 0-10 11M6 20l-1 6 6-2" fill="none" stroke="#2498f0" strokeWidth="4" /><path d="M23 14l4 6-3 2-4-4z" fill="#5bc416" /><path d="M25 21l5 2-2 4-5-3z" fill="#3a9be8" /><path d="M19 23l6 2-2 5-4-2z" fill="#f47a1e" /><path d="M15 20l6-1v4l-5 1z" fill="#fbc320" /></>,
  },
  {
    name: 'Docs', open: true,
    icon: <><rect width="30" height="30" rx="3" fill="#3f87f2" /><path d="M7 9l8-5 8 5v11l-8 6-8-6v-6l5 3v5l3 2 4-3v-8l-4-3-3 2v4l-5-3z" fill="#fff" /></>,
  },
  {
    name: 'Word', open: true,
    icon: <><path d="M4 1h24v26h-24z" fill="#c9daf3" stroke="#7b9ccf" /><path d="M17 8h9M17 12h9" stroke="#7b9ccf" /><path d="M18 17l11 0-3 11h-11z" fill="#fff" /><text x="11" y="20" fontSize="20" fontWeight="700" fill="#1b57b0" textAnchor="middle" fontFamily="Open Sans, sans-serif">W</text></>,
  },
  {
    name: 'SOLIDWORKS', open: true,
    icon: <><path d="M1 6l14-5 14 4v19l-13 6-15-6z" fill="#b80f14" /><path d="M1 6l14-5 14 4-13 5z" fill="#e8282b" /><path d="M16 10l13-5v19l-13 6z" fill="#8c0a0f" /><text x="15" y="21" fontSize="14" fontWeight="700" fill="#fff" textAnchor="middle" fontFamily="Open Sans, sans-serif">SW</text><text x="21" y="29" fontSize="8" fontWeight="700" fill="#fff" textAnchor="middle" fontFamily="Open Sans, sans-serif">2018</text></>,
  },
  {
    name: 'AutoCAD', open: true,
    icon: <><path d="M0 0h30v30h-30z" fill="#f9e3dc" /><text x="15" y="26" fontSize="29" fontWeight="800" fill="#b3202a" textAnchor="middle" fontFamily="Open Sans, sans-serif">A</text></>,
  },
];

const Taskbar = () => (
  <div className="h-[50px] flex bg-linear-to-r from-[#24343b] via-[#2a3237] to-[#1f2d34] text-white">
    <button aria-label="Start" className="w-[60px] flex items-center justify-center">
      <svg viewBox="0 0 20 20" className="size-5" fill="#fff"><path d="M0 3l8-1v7h-8zM9 2l11-2v9h-11zM0 10h8v8l-8-1zM9 10h11v10l-11-2z" /></svg>
    </button>
    <label className="w-[430px] flex items-center border border-[#bbb] bg-[#f2f2f2]">
      <svg viewBox="0 0 20 20" className="ml-3.5 size-5" fill="none" stroke="#222" strokeWidth="1.500"><circle cx="12.500" cy="7.500" r="6.500" /><path d="M8 12l-7 7" /></svg>
      <input aria-label="搜索" placeholder="在这里输入你要搜索的内容" className="ml-[15px] min-w-0 flex-1 text-[19px] outline-none placeholder:text-[#333]" />
    </label>
    <div className="ml-[3px] flex">
      {apps.map(app => (
        <button key={app.name} aria-label={app.name} className={`relative w-[62px] flex items-center justify-center ${app.name === 'SOLIDWORKS' ? 'bg-[#566165]' : ''}`}>
          <svg viewBox="0 0 30 30" className="size-[30px] overflow-visible">{app.icon}</svg>
          {app.open && <span className={`absolute bottom-0 h-[3px] bg-[#76b9ed] ${app.name === 'SOLIDWORKS' ? 'inset-x-0' : 'inset-x-1.5'}`} />}
        </button>
      ))}
    </div>
    <div className="ml-auto flex items-center">
      <svg viewBox="0 0 152 26" className="w-[152px] h-[26px]" fill="none" stroke="#fff" strokeWidth="1.500" aria-hidden="true">
        <path d="M2 17l7-7 7 7" />
        <path d="M35 8h13v9h-13zM48 11h2v4" /><path d="M37 10h10v6h-10z" fill="#fff" /><path d="M30 6v3h4v-3M32 9v6" />
        <circle cx="70" cy="13" r="9" /><ellipse cx="70" cy="13" rx="4" ry="9" /><path d="M61 10h18M61 16h18" /><circle cx="76" cy="19" r="4" fill="#24343b" />
        <path d="M91 10h3l4-4v14l-4-4h-3zM101 10l6 6M107 10l-6 6" />
        <rect x="120" y="4" width="29" height="18" /><path d="M123 9h23M123 13h23" strokeDasharray="2 1" /><path d="M127 18h14" />
      </svg>
      <span className="ml-1.5 text-[18px] font-medium">英</span>
      <div className="ml-3.5 w-[86px] text-center text-[15px] leading-[23px]"><div>16:40</div><div>2022-03-17</div></div>
      <button aria-label="Notifications" className="ml-5 w-11">
        <svg viewBox="0 0 36 36" className="size-9"><path d="M4 5h21v18h-9l-4 4v-4h-8z" fill="#fff" /><path d="M8 10h13M8 14h13M8 18h8" stroke="#24343b" /><circle cx="24" cy="24" r="10" fill="#444c50" stroke="#999" /><text x="24" y="29" fontSize="14" fontWeight="700" fill="#fff" textAnchor="middle" fontFamily="Open Sans, sans-serif">9</text></svg>
      </button>
      <div className="h-[50px] w-1.5 border-l border-[#778]" />
    </div>
  </div>
);

const App = () => (
  <div className="min-h-screen flex flex-col bg-[#f7f7f7] text-black font-['Open_Sans','Noto_Sans_CJK_SC',sans-serif]">
    <TitleBar />
    <main className="flex-1 flex">
      <div className="w-[51px] shrink-0 flex flex-col">
        <div className="w-[34px] pb-[7px] border-r border-[#888]"><ToolColumn tools={sheetTools} /></div>
        <div className="w-[49px] flex-1 border-y border-[#888] mb-0.5">
          <ToolColumn tools={noteTools} />
          <div className="mt-3.5 flex justify-center text-[#555]">
            <svg viewBox="0 0 8 10" className="w-2 h-2.5" fill="none" stroke="currentColor" strokeWidth="1.500"><path d="M0 1l4 3 4-3M0 6l4 3 4-3" /></svg>
          </div>
        </div>
      </div>
      <div className="flex-1 min-w-0 flex flex-col">
        <div className="h-[25px] bg-black pl-[25px] pt-[5px]"><TopRuler /></div>
        <div className="flex-1 flex">
          <div className="w-6 bg-black pl-1 pt-px flex"><SideRuler /></div>
          <div className="flex-1 min-w-0 flex flex-col">
            <div className="flex-1 flex"><FeaturePanel /><Viewport /></div>
            <SheetTabs />
          </div>
        </div>
      </div>
      <div className="w-[53px] shrink-0 border-l border-[#777]"><ToolColumn tools={sketchTools} /></div>
    </main>
    <BottomToolbars />
    <StatusBar />
    <Taskbar />
  </div>
);

export default App;
